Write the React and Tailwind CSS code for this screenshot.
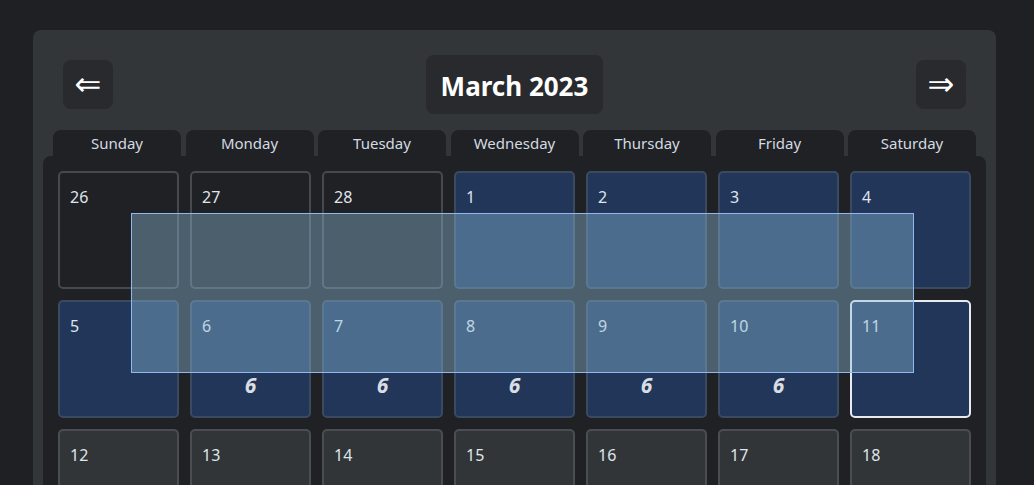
import React from "react";

const days = ["Sunday", "Monday", "Tuesday", "Wednesday", "Thursday", "Friday", "Saturday"];

const weeks = [
  [
    { n: 26, t: "past" }, { n: 27, t: "past" }, { n: 28, t: "past" },
    { n: 1, t: "sel" }, { n: 2, t: "sel" }, { n: 3, t: "sel" }, { n: 4, t: "sel" },
  ],
  [
    { n: 5, t: "sel" }, { n: 6, t: "sel", v: 6 }, { n: 7, t: "sel", v: 6 }, { n: 8, t: "sel", v: 6 },
    { n: 9, t: "sel", v: 6 }, { n: 10, t: "sel", v: 6 }, { n: 11, t: "today" },
  ],
  [
    { n: 12, t: "fut" }, { n: 13, t: "fut" }, { n: 14, t: "fut" }, { n: 15, t: "fut" },
    { n: 16, t: "fut" }, { n: 17, t: "fut" }, { n: 18, t: "fut" },
  ],
];

function Cell({ c }) {
  let cls = "";
  if (c.t === "past") cls = "bg-[#202124] border-[#46494d]";
  else if (c.t === "sel") cls = "bg-[#22365a] border-[#3c4a60]";
  else if (c.t === "today") cls = "bg-[#22365a] border-[#e8eaed]";
  else cls = "bg-[#323538] border-[#4a4d51]";
  return (
    <div className={`relative h-[118px] rounded-[5px] border-2 ${cls} px-[10px] pt-[12px] pb-[11px] flex flex-col`}>
      <span className="text-[16px] leading-6 text-[#dfe5eb]">{c.n}</span>
      {c.v ? (
        <span className="mt-auto mb-[6px] text-center text-[21px] leading-7 font-bold italic text-[#d9dee4]">{c.v}</span>
      ) : null}
    </div>
  );
}

export default function App() {
  return (
    <div
      className="relative h-[485px] bg-[#1f2023] pt-[30px] px-[33px] pb-0 overflow-hidden"
      style={{ fontFamily: '"Noto Sans", "Open Sans", sans-serif' }}
    >
      <div className="w-[963px] rounded-t-lg bg-[#333639] pt-[25px] px-[10px]">
        <div className="flex items-center justify-between px-[20px] h-[59px]">
          <button className="w-[50px] h-[49px] rounded-lg bg-[#282a2d] flex items-center justify-center text-white text-[32px] leading-none pb-[2px]" style={{ fontFamily: '"DejaVu Sans", sans-serif' }}>
            ⇐
          </button>
          <div className="h-[59px] w-[177px] rounded-lg bg-[#282a2d] flex items-center justify-center text-white text-[26px] font-bold pt-[4px]">
            March 2023
          </div>
          <button className="w-[50px] h-[49px] rounded-lg bg-[#282a2d] flex items-center justify-center text-white text-[32px] leading-none pb-[2px]" style={{ fontFamily: '"DejaVu Sans", sans-serif' }}>
            ⇒
          </button>
        </div>
        <div className="mt-4 mx-[10px] grid grid-cols-7 gap-x-[4.5px]">
          {days.map((d) => (
            <div key={d} className="h-[26px] rounded-t-lg bg-[#202124] text-center text-[15px] leading-[26px] text-[#d3dae1]">
              {d}
            </div>
          ))}
        </div>
        <div className="rounded-t-lg bg-[#202124] p-[15px] grid grid-cols-7 gap-[11px]">
          {weeks.flat().map((c, i) => (
            <Cell key={i} c={c} />
          ))}
        </div>
      </div>
      <div className="absolute left-[131px] top-[213px] w-[783px] h-[160px] border border-[#8fb8ee] bg-[rgba(140,190,220,0.4)]" />
    </div>
  );
}
